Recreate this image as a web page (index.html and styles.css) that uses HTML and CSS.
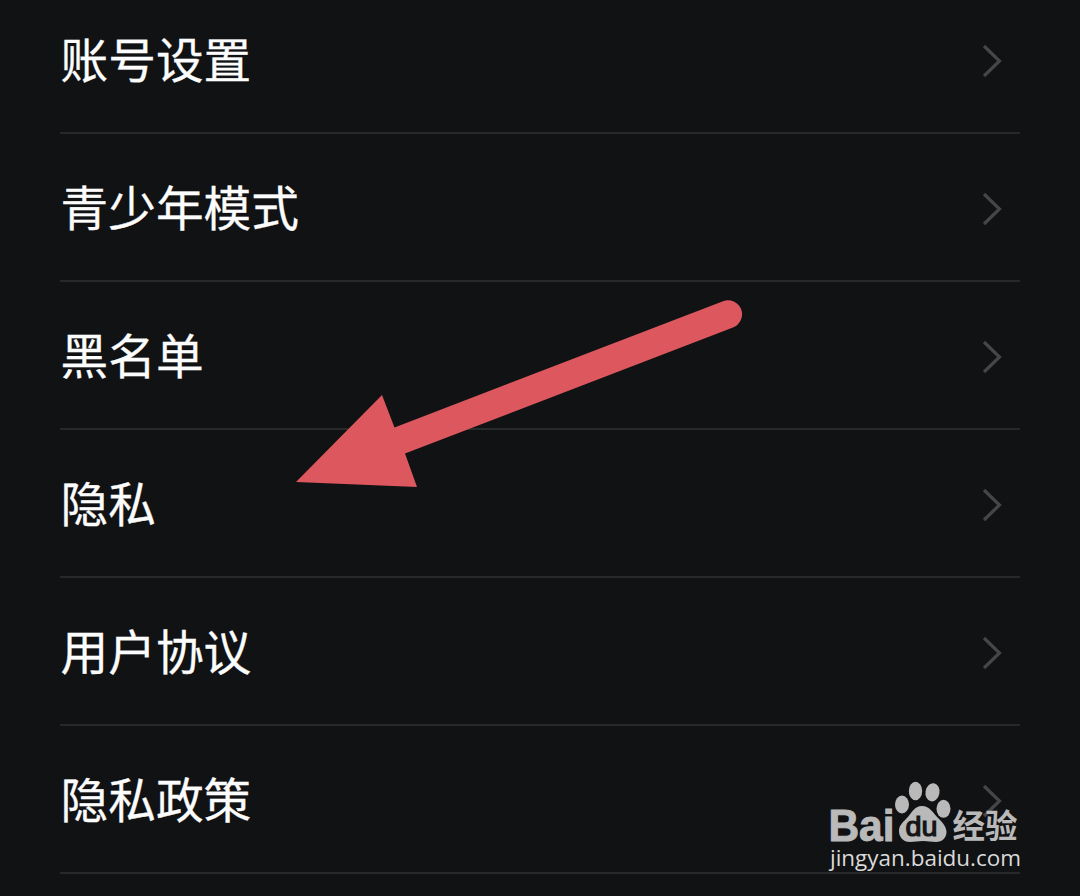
FILE: index.html
```html
<!DOCTYPE html>
<html lang="zh-CN">
<head>
  <meta charset="UTF-8">
  <meta name="viewport" content="width=device-width, initial-scale=1.0"/>
  <title>设置</title>
  <link rel="stylesheet" href="styles.css">
</head>
<body>
  <div class="screen">
    <ul class="list">
      <li class="item"><span class="label">账号设置</span><svg class="chevron" viewBox="0 0 22 36"><path d="M3 3L18.500 18L3 33"/></svg></li>
      <li class="item"><span class="label">青少年模式</span><svg class="chevron" viewBox="0 0 22 36"><path d="M3 3L18.500 18L3 33"/></svg></li>
      <li class="item"><span class="label">黑名单</span><svg class="chevron" viewBox="0 0 22 36"><path d="M3 3L18.500 18L3 33"/></svg></li>
      <li class="item"><span class="label">隐私</span><svg class="chevron" viewBox="0 0 22 36"><path d="M3 3L18.500 18L3 33"/></svg></li>
      <li class="item"><span class="label">用户协议</span><svg class="chevron" viewBox="0 0 22 36"><path d="M3 3L18.500 18L3 33"/></svg></li>
      <li class="item"><span class="label">隐私政策</span><svg class="chevron" viewBox="0 0 22 36"><path d="M3 3L18.500 18L3 33"/></svg></li>
    </ul>

    <!-- arrow pointing at 隐私 -->
    <svg class="arrow" viewBox="0 0 460 200">
      <path d="M6 192L92 105L104.500 137.500L433 11.200A14 14 0 0 1 443 37.500L115 163.500L127 197Z"/>
    </svg>

    <svg class="watermark" viewBox="0 0 200 100">
      <text class="brand" x="6.500" y="65.500" textLength="66" lengthAdjust="spacingAndGlyphs">Bai</text>
      <g class="paw">
        <ellipse cx="80" cy="29.500" rx="7" ry="9"/>
        <ellipse cx="93.500" cy="16" rx="6.700" ry="9.200"/>
        <ellipse cx="110.500" cy="17.300" rx="7" ry="9.200" transform="rotate(10 110.500 17.300)"/>
        <ellipse cx="121.500" cy="33.800" rx="7" ry="9"/>
        <path d="M100 31C108 31 111 38 116 43C121 48 124.500 52 124.500 57C124.500 63 120 67 114 67C109 67 106 66 101 66C96 66 93 67 88 67C81 67 77 62 77 56C77 51 80 48 84 44C90 38 92 31 100 31Z"/>
      </g>
      <text class="du" x="83.500" y="61" textLength="32" lengthAdjust="spacingAndGlyphs">du</text>
      <text class="brand-cn" x="130.500" y="63" textLength="65" lengthAdjust="spacingAndGlyphs">经验</text>
      <text class="site" x="8" y="91" textLength="191" lengthAdjust="spacingAndGlyphs">jingyan.baidu.com</text>
    </svg>
  </div>
</body>
</html>
```

FILE: styles.css
```css
body{
  margin: 0;
  background-color: #111214;
  font-family: "Noto Sans CJK SC", sans-serif;
}
.screen{
  position: relative;
  height: 896px;
  overflow: hidden;
}
.list{
  list-style: none;
  margin: -14px 60px 0;
  padding: 0;
}
.item{
  display: flex;
  align-items: center;
  justify-content: space-between;
  box-sizing: border-box;
  height: 148px;
  padding: 4px 17px 0 0;
  border-bottom: 2px solid #28292b;
}
.label{
  color: #fcfcfc;
  font-size: 47.700px;
  line-height: 70px;
  padding: 0 0 7px 0.500px;
  -webkit-text-stroke: 0.300px #fcfcfc;
}
.chevron{
  width: 22px;
  height: 36px;
}
.chevron path{
  fill: none;
  stroke: #454648;
  stroke-width: 3.200;
}
.arrow{
  position: absolute;
  left: 290px;
  top: 290px;
  width: 460px;
  height: 200px;
  fill: #dc585e;
}
.watermark{
  position: absolute;
  left: 822px;
  top: 775px;
  width: 200px;
  height: 100px;
  fill: #b9b9b9;
  overflow: visible;
}
.brand{
  font-family: "Liberation Sans", sans-serif;
  font-weight: bold;
  font-size: 44px;
  stroke: #b9b9b9;
  stroke-width: 1;
}
.du{
  font-family: "Liberation Sans", sans-serif;
  font-size: 27px;
  fill: #151618;
  stroke: #151618;
  stroke-width: 1.200;
}
.brand-cn{
  font-size: 33px;
  font-weight: bold;
}
.site{
  font-family: "Open Sans", "Noto Sans", sans-serif;
  font-size: 22.500px;
  font-weight: 500;
  fill: #dadada;
}
```
